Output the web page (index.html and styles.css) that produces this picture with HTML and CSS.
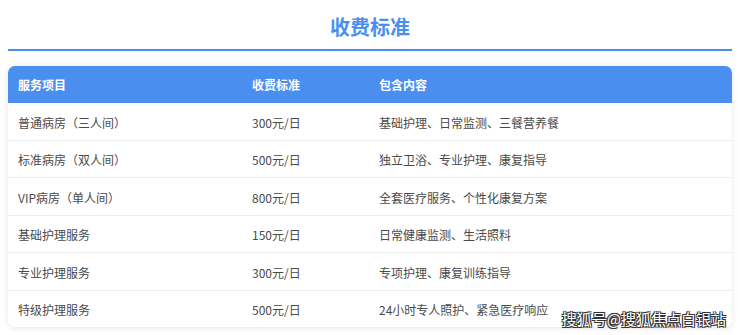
FILE: index.html
```html
<!DOCTYPE html>
<html lang="zh-CN">
<head>
    <meta charset="UTF-8">
    <meta name="viewport" content="width=device-width, initial-scale=1.0">
    <title>收费标准</title>
    <link rel="stylesheet" href="styles.css">
</head>
<body>
    <div class="container">
        <h2 class="title">收费标准</h2>
        <div class="table-card">
            <table class="fee-table">
                <thead>
                    <tr>
                        <th class="col-item">服务项目</th>
                        <th class="col-price">收费标准</th>
                        <th>包含内容</th>
                    </tr>
                </thead>
                <tbody>
                    <tr>
                        <td>普通病房（三人间）</td>
                        <td>300元/日</td>
                        <td>基础护理、日常监测、三餐营养餐</td>
                    </tr>
                    <tr>
                        <td>标准病房（双人间）</td>
                        <td>500元/日</td>
                        <td>独立卫浴、专业护理、康复指导</td>
                    </tr>
                    <tr>
                        <td>VIP病房（单人间）</td>
                        <td>800元/日</td>
                        <td>全套医疗服务、个性化康复方案</td>
                    </tr>
                    <tr>
                        <td>基础护理服务</td>
                        <td>150元/日</td>
                        <td>日常健康监测、生活照料</td>
                    </tr>
                    <tr>
                        <td>专业护理服务</td>
                        <td>300元/日</td>
                        <td>专项护理、康复训练指导</td>
                    </tr>
                    <tr>
                        <td>特级护理服务</td>
                        <td>500元/日</td>
                        <td>24小时专人照护、紧急医疗响应</td>
                    </tr>
                </tbody>
            </table>
        </div>
    </div>
    <div class="watermark">搜狐号@搜狐焦点白银站</div>
</body>
</html>
```

FILE: styles.css
```css
body {
    margin: 0;
    font-family: "Noto Sans CJK SC", "Noto Sans", sans-serif;
    background: #fff;
    color: #444;
    position: relative;
    height: 335px;
    overflow: hidden;
}
.container {
    padding: 13px 8px 0 8px;
}
.title {
    margin: 0;
    text-align: center;
    font-size: 20px;
    line-height: 28px;
    font-weight: bold;
    color: #4a8ff0;
    padding-bottom: 8px;
    border-bottom: 2px solid #4a8ff0;
}
.table-card {
    margin-top: 15px;
    border-radius: 7px;
    overflow: hidden;
    box-shadow: 0 1px 6px rgba(0, 0, 0, 0.1);
    background: #fff;
}
.fee-table {
    width: 100%;
    border-collapse: collapse;
    font-size: 12px;
    line-height: 16.5px;
}
.fee-table th {
    background: #4a8ff0;
    color: #fff;
    font-weight: bold;
    text-align: left;
    padding: 10px;
    line-height: 17px;
}
.fee-table td {
    padding: 11.5px 10px 8.5px 10px;
    border-bottom: 1px solid #eee;
    color: #4a4a4a;
}
.fee-table tr:last-child td {
    border-bottom: none;
}
.col-item {
    width: 214px;
}
.col-price {
    width: 107px;
}
.watermark {
    position: absolute;
    right: 14px;
    top: 309px;
    font-size: 15px;
    line-height: 20px;
    color: #fff;
    text-shadow: -1px -1px 0 #333, 1px -1px 0 #333, -1px 1px 0 #333, 1px 1px 0 #333, 0 0 2px #333;
}
```
